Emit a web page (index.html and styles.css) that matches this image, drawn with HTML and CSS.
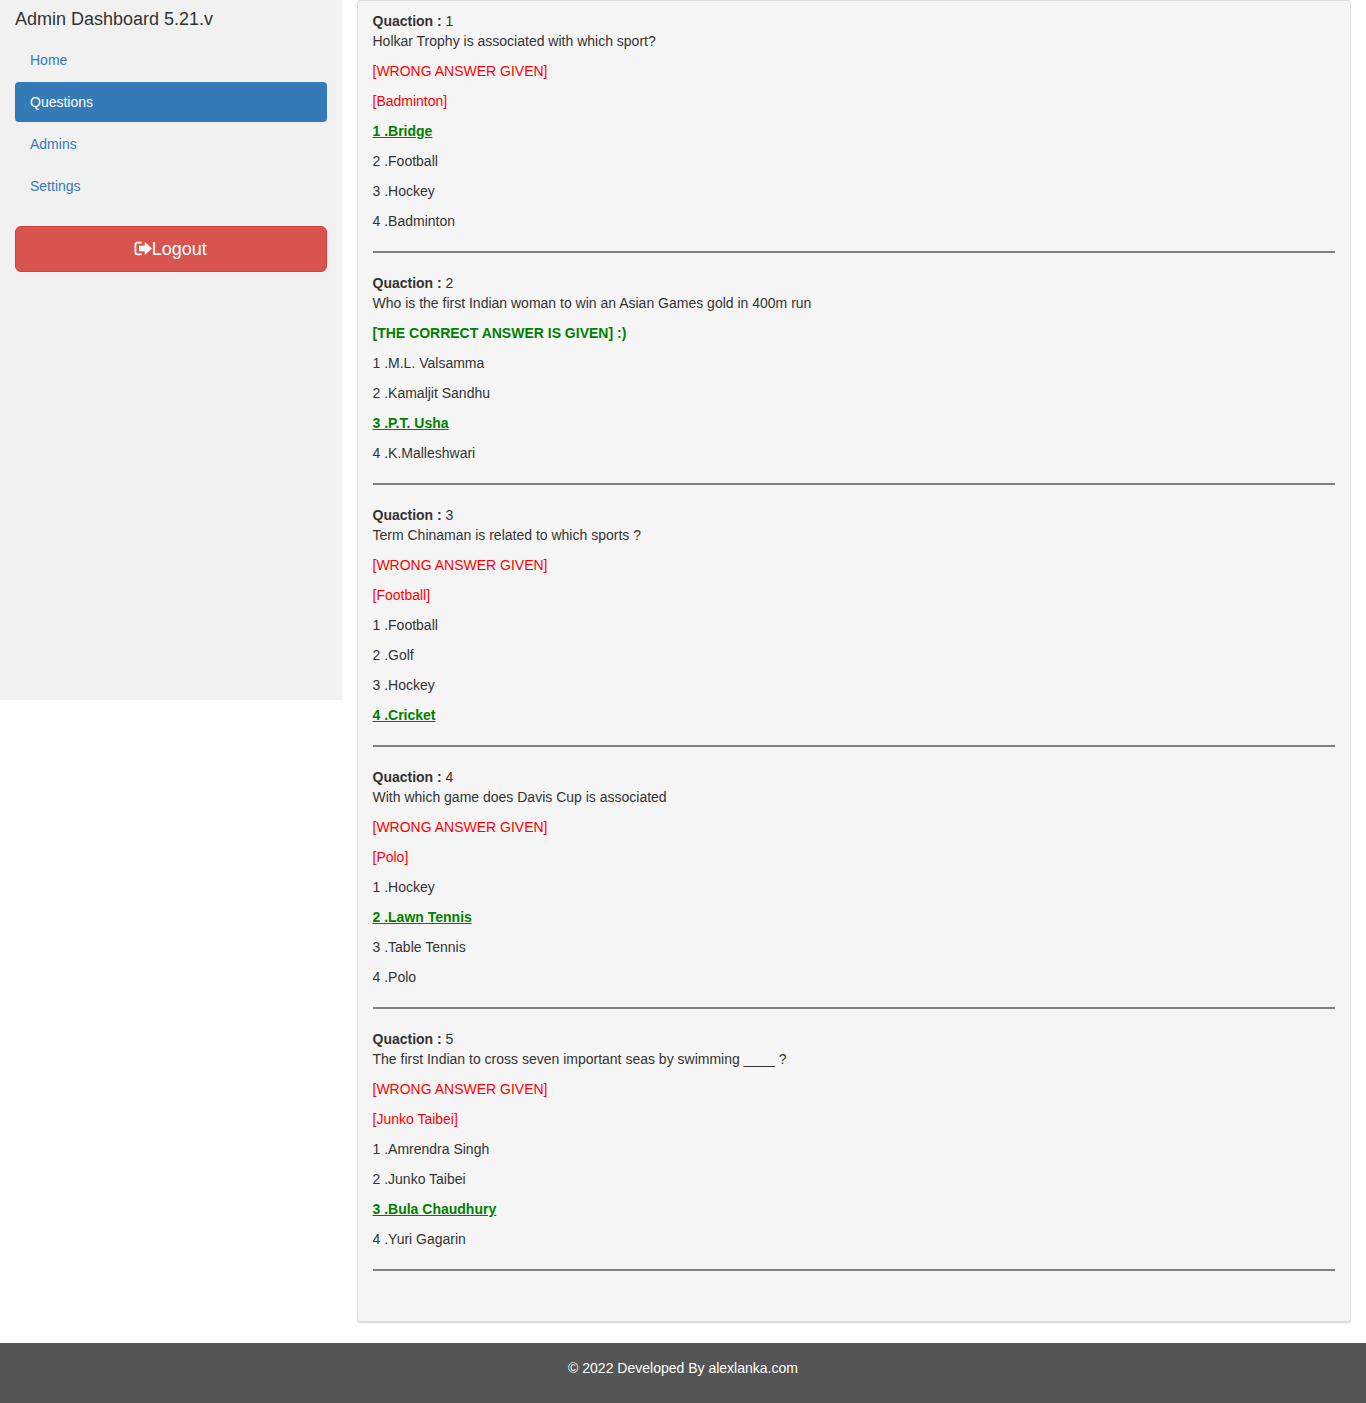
FILE: index.html
```html
<!DOCTYPE html>
<html lang="en">
<head>
<meta charset="utf-8">
<title>Admin Dashboard</title>
<link rel="stylesheet" href="styles.css">
</head>
<body>
<div class="content">
  <aside class="sidenav">
    <h4 class="title">Admin Dashboard 5.21.v</h4>
    <ul class="nav">
      <li><a href="#">Home</a></li>
      <li class="active"><a href="#">Questions</a></li>
      <li><a href="#">Admins</a></li>
      <li><a href="#">Settings</a></li>
    </ul>
    <button class="logout" type="button"><svg class="icon" viewBox="0 0 18 18" width="18" height="18" aria-hidden="true"><path d="M7.6 2.6H3.6Q1.4 2.6 1.4 4.8V12.2Q1.4 14.4 3.6 14.4H7.6" fill="none" stroke="#fff" stroke-width="1.8"/><path d="M5 5.8H10.8V2.1L17.9 8.5L10.8 14.9V11.2H5Z" fill="#fff"/></svg>Logout</button>
  </aside>
  <main class="main">
    <div class="panel">
      <section class="question">
        <div><b>Quaction :</b> 1</div>
        <p>Holkar Trophy is associated with which sport?</p>
        <p class="wrong">[WRONG ANSWER GIVEN]</p>
        <p class="wrong">[Badminton]</p>
        <p class="answer">1 .Bridge</p>
        <p>2 .Football</p>
        <p>3 .Hockey</p>
        <p>4 .Badminton</p>
      </section>
      <section class="question">
        <div><b>Quaction :</b> 2</div>
        <p>Who is the first Indian woman to win an Asian Games gold in 400m run</p>
        <p class="correct">[THE CORRECT ANSWER IS GIVEN] :)</p>
        <p>1 .M.L. Valsamma</p>
        <p>2 .Kamaljit Sandhu</p>
        <p class="answer">3 .P.T. Usha</p>
        <p>4 .K.Malleshwari</p>
      </section>
      <section class="question">
        <div><b>Quaction :</b> 3</div>
        <p>Term Chinaman is related to which sports ?</p>
        <p class="wrong">[WRONG ANSWER GIVEN]</p>
        <p class="wrong">[Football]</p>
        <p>1 .Football</p>
        <p>2 .Golf</p>
        <p>3 .Hockey</p>
        <p class="answer">4 .Cricket</p>
      </section>
      <section class="question">
        <div><b>Quaction :</b> 4</div>
        <p>With which game does Davis Cup is associated</p>
        <p class="wrong">[WRONG ANSWER GIVEN]</p>
        <p class="wrong">[Polo]</p>
        <p>1 .Hockey</p>
        <p class="answer">2 .Lawn Tennis</p>
        <p>3 .Table Tennis</p>
        <p>4 .Polo</p>
      </section>
      <section class="question">
        <div><b>Quaction :</b> 5</div>
        <p>The first Indian to cross seven important seas by swimming ____ ?</p>
        <p class="wrong">[WRONG ANSWER GIVEN]</p>
        <p class="wrong">[Junko Taibei]</p>
        <p>1 .Amrendra Singh</p>
        <p>2 .Junko Taibei</p>
        <p class="answer">3 .Bula Chaudhury</p>
        <p>4 .Yuri Gagarin</p>
      </section>
    </div>
  </main>
</div>
<footer class="footer"><p>© 2022 Developed By alexlanka.com</p></footer>
</body>
</html>
```
FILE: styles.css
```css
* { box-sizing: border-box; }
body {
  margin: 0;
  font: 14px/20px "Liberation Sans", Arial, sans-serif;
  color: #333;
  background: #fff;
}
p { margin: 0 0 10px; }
.content { display: flex; align-items: flex-start; }
.sidenav {
  width: 25%;
  height: 700px;
  padding: 10px 15px;
  background: #f1f1f1;
}
.title { margin: 0 0 10px; font-size: 18px; font-weight: 500; line-height: 19.8px; }
.nav {
  display: flex;
  flex-direction: column;
  gap: 2px;
  margin: 0 0 20px;
  padding: 0;
  list-style: none;
}
.nav a {
  display: block;
  padding: 10px 15px;
  border-radius: 4px;
  color: #337ab7;
  text-decoration: none;
}
.nav .active a { background: #337ab7; color: #fff; }
.logout {
  display: flex;
  align-items: center;
  justify-content: center;
  width: 100%;
  height: 46px;
  padding: 0 17px 0 16px;
  border: 1px solid #d43f3a;
  border-radius: 6px;
  background: #d9534f;
  color: #fff;
  font: 18px/24px "Liberation Sans", Arial, sans-serif;
}
.main { flex: 1; padding: 0 15px; }
.panel {
  margin-bottom: 20px;
  padding: 10px 15px 30px;
  border: 1px solid #ddd;
  border-bottom-width: 2px;
  border-radius: 4px;
  background: #f5f5f5;
  box-shadow: 0 1px 1px rgba(0, 0, 0, .05);
}
.question { margin-bottom: 20px; padding-bottom: 10px; border-bottom: 2px solid #808080; }
.wrong { color: #f00; }
.correct { color: green; font-weight: 700; }
.answer { color: green; font-weight: 700; text-decoration: underline; }
.footer { padding: 15px; background: #555; color: #fff; text-align: center; }
```
